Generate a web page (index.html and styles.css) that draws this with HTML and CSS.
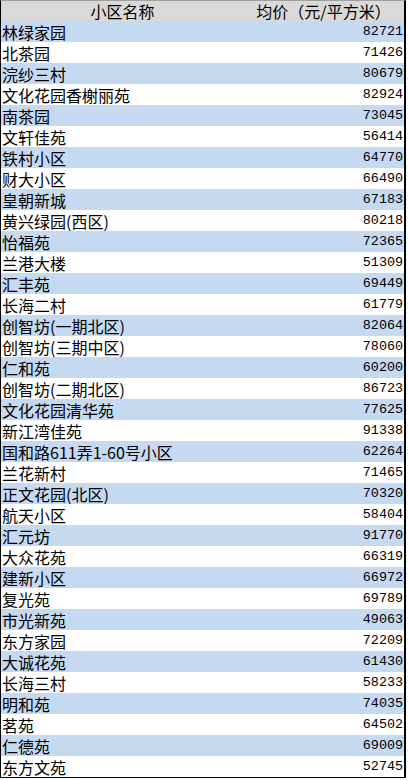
FILE: index.html
```html
<!DOCTYPE html>
<html lang="zh">
<head>
<meta charset="utf-8">
<title>小区均价</title>
<link rel="stylesheet" href="styles.css">
</head>
<body>
<div class="sheet">
  <div class="row head"><div class="name">小区名称</div><div class="price">均价（元/平方米）</div></div>
  <div class="row odd"><div class="name">林绿家园</div><div class="price">82721</div></div>
  <div class="row"><div class="name">北茶园</div><div class="price">71426</div></div>
  <div class="row odd"><div class="name">浣纱三村</div><div class="price">80679</div></div>
  <div class="row"><div class="name">文化花园香榭丽苑</div><div class="price">82924</div></div>
  <div class="row odd"><div class="name">南茶园</div><div class="price">73045</div></div>
  <div class="row"><div class="name">文轩佳苑</div><div class="price">56414</div></div>
  <div class="row odd"><div class="name">铁村小区</div><div class="price">64770</div></div>
  <div class="row"><div class="name">财大小区</div><div class="price">66490</div></div>
  <div class="row odd"><div class="name">皇朝新城</div><div class="price">67183</div></div>
  <div class="row"><div class="name">黄兴绿园(西区)</div><div class="price">80218</div></div>
  <div class="row odd"><div class="name">怡福苑</div><div class="price">72365</div></div>
  <div class="row"><div class="name">兰港大楼</div><div class="price">51309</div></div>
  <div class="row odd"><div class="name">汇丰苑</div><div class="price">69449</div></div>
  <div class="row"><div class="name">长海二村</div><div class="price">61779</div></div>
  <div class="row odd"><div class="name">创智坊(一期北区)</div><div class="price">82064</div></div>
  <div class="row"><div class="name">创智坊(三期中区)</div><div class="price">78060</div></div>
  <div class="row odd"><div class="name">仁和苑</div><div class="price">60200</div></div>
  <div class="row"><div class="name">创智坊(二期北区)</div><div class="price">86723</div></div>
  <div class="row odd"><div class="name">文化花园清华苑</div><div class="price">77625</div></div>
  <div class="row"><div class="name">新江湾佳苑</div><div class="price">91338</div></div>
  <div class="row odd"><div class="name">国和路611弄1-60号小区</div><div class="price">62264</div></div>
  <div class="row"><div class="name">兰花新村</div><div class="price">71465</div></div>
  <div class="row odd"><div class="name">正文花园(北区)</div><div class="price">70320</div></div>
  <div class="row"><div class="name">航天小区</div><div class="price">58404</div></div>
  <div class="row odd"><div class="name">汇元坊</div><div class="price">91770</div></div>
  <div class="row"><div class="name">大众花苑</div><div class="price">66319</div></div>
  <div class="row odd"><div class="name">建新小区</div><div class="price">66972</div></div>
  <div class="row"><div class="name">复光苑</div><div class="price">69789</div></div>
  <div class="row odd"><div class="name">市光新苑</div><div class="price">49063</div></div>
  <div class="row"><div class="name">东方家园</div><div class="price">72209</div></div>
  <div class="row odd"><div class="name">大诚花苑</div><div class="price">61430</div></div>
  <div class="row"><div class="name">长海三村</div><div class="price">58233</div></div>
  <div class="row odd"><div class="name">明和苑</div><div class="price">74035</div></div>
  <div class="row"><div class="name">茗苑</div><div class="price">64502</div></div>
  <div class="row odd"><div class="name">仁德苑</div><div class="price">69009</div></div>
  <div class="row"><div class="name">东方文苑</div><div class="price">52745</div></div>
</div>
</body>
</html>
```
FILE: styles.css
```css
html, body {
  margin: 0;
  padding: 0;
  background: #ffffff;
}
.sheet {
  width: 403px;
  border-left: 1px solid #000;
  border-right: 2px solid #000;
  border-bottom: 1px solid #000;
  border-top: 1px solid #a0a0a0;
  font-family: "Noto Sans CJK SC", sans-serif;
  font-size: 16px;
  color: #000;
}
.row {
  display: grid;
  grid-template-columns: 243px 1fr;
  align-items: center;
  height: 21px;
  background: #ffffff;
}
.row.odd {
  background: #c5d9f1;
}
.row.head {
  height: 20px;
  background: #d9d9d9;
}
.name {
  padding-left: 1px;
  white-space: nowrap;
  line-height: 16px;
}
.price {
  text-align: right;
  padding-right: 1px;
  font-family: "Liberation Mono", monospace;
  font-size: 13.4px;
  line-height: 14px;
}
.head .name {
  text-align: center;
  padding-left: 0;
}
.head .price {
  text-align: center;
  font-family: "Noto Sans CJK SC", sans-serif;
  font-size: 16px;
  line-height: 16px;
}
```
